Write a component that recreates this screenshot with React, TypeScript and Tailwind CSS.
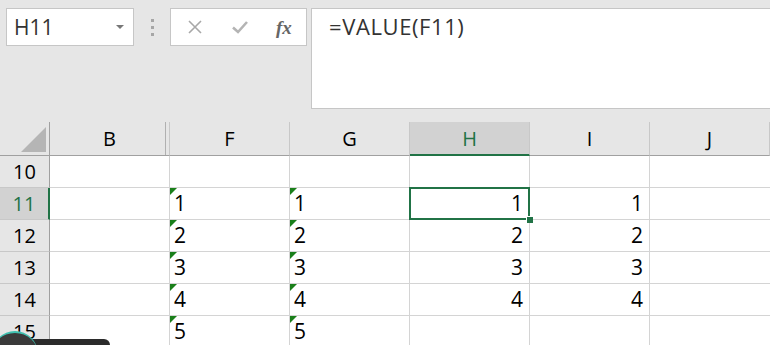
import React from "react";

type Row = {
  num: number;
  f?: string;
  g?: string;
  h?: string;
  i?: string;
};

const rows: Row[] = [
  { num: 10 },
  { num: 11, f: "1", g: "1", h: "1", i: "1" },
  { num: 12, f: "2", g: "2", h: "2", i: "2" },
  { num: 13, f: "3", g: "3", h: "3", i: "3" },
  { num: 14, f: "4", g: "4", h: "4", i: "4" },
  { num: 15, f: "5", g: "5" },
];

const cols = ["B", "F", "G", "H", "I", "J"];

const font = { fontFamily: '"Open Sans", "Noto Sans", sans-serif' };

const TextCell = ({ value }: { value?: string }) => (
  <div className="relative h-8 border-r border-b border-[#d4d4d4] flex items-end pl-[4px] pb-[1px] text-[21px] leading-none text-black">
    {value && (
      <span className="absolute left-0 top-0 w-0 h-0 border-t-[7px] border-r-[7px] border-t-[#1a7f1a] border-r-transparent" />
    )}
    <span className="pb-[4px]">{value}</span>
  </div>
);

const NumCell = ({ value, selected }: { value?: string; selected?: boolean }) => (
  <div
    className={`relative h-8 border-r border-b border-[#d4d4d4] flex items-end justify-end pr-[6px] text-[21px] leading-none text-black ${
      selected ? "z-10" : ""
    }`}
  >
    {selected && (
      <>
        <span className="absolute -left-[1px] -top-[1px] -right-[1px] -bottom-[1px] border-2 border-[#217346]" />
        <span className="absolute -right-[4px] -bottom-[4px] w-[7px] h-[7px] bg-[#217346] border-l border-t border-white" />
      </>
    )}
    <span className="pb-[5px]">{value}</span>
  </div>
);

export default function App() {
  return (
    <div className="w-[770px] h-[345px] overflow-hidden relative bg-white" style={font}>
      {/* formula bar */}
      <div className="h-[122px] bg-[#e6e6e6] flex items-start pt-2 pl-[6px] gap-0">
        <div className="w-[128px] h-[38px] bg-white border border-[#c6c6c6] flex items-center justify-between pl-[7px] pr-[9px]">
          <span className="text-[21px] text-[#333] leading-none">H11</span>
          <span className="w-0 h-0 border-l-[4px] border-r-[4px] border-t-[4px] border-l-transparent border-r-transparent border-t-[#777]" />
        </div>
        <div className="w-[36px] h-[38px] flex flex-col items-center justify-center gap-[4px]">
          <span className="w-[3px] h-[3px] bg-[#a6a6a6]" />
          <span className="w-[3px] h-[3px] bg-[#a6a6a6]" />
          <span className="w-[3px] h-[3px] bg-[#a6a6a6]" />
        </div>
        <div className="w-[137px] h-[38px] bg-white border border-[#c6c6c6] flex items-center pl-[15px] gap-[26px]">
          <svg width="16" height="16" viewBox="0 0 16 16" className="ml-[1px]">
            <path d="M2 2 L14 14 M14 2 L2 14" stroke="#a8a8a8" strokeWidth="1.6" fill="none" />
          </svg>
          <svg width="18" height="16" viewBox="0 0 18 16" className="ml-[2px]">
            <path d="M2 8.5 L7 13 L16 3" stroke="#b4b4b4" strokeWidth="2.6" fill="none" />
          </svg>
          <span
            className="text-[19px] italic font-bold text-[#666] leading-none ml-[1px]"
            style={{ fontFamily: '"Liberation Serif", serif' }}
          >
            fx
          </span>
        </div>
        <div className="ml-[4px] flex-1 h-[101px] bg-white border border-[#c6c6c6] border-r-0 pl-[17px] pt-[6px]">
          <span className="text-[22px] tracking-[0.6px] text-[#333] leading-none">=VALUE(F11)</span>
        </div>
      </div>

      {/* sheet */}
      <div className="grid grid-cols-[50px_120px_120px_120px_120px_120px_120px]">
        {/* header row */}
        <div className="h-[34px] bg-[#e6e6e6] border-r border-b border-[#a0a0a0] flex items-end justify-end pr-[3px] pb-[3px]">
          <svg width="25" height="25" viewBox="0 0 25 25">
            <path d="M25 0 L25 25 L0 25 Z" fill="#b5b5b5" />
          </svg>
        </div>
        {cols.map((c) => {
          const active = c === "H";
          return (
            <div
              key={c}
              className={`relative h-[34px] flex items-center justify-center text-[20px] leading-none border-r border-[#c8c8c8] ${
                active
                  ? "bg-[#d2d2d2] text-[#217346] border-b-2 border-b-[#217346]"
                  : "bg-[#e6e6e6] text-black border-b border-b-[#a0a0a0]"
              }`}
            >
              {c === "B" && (
                <span className="absolute right-[1px] top-0 bottom-0 w-[3px] border-l border-[#b0b0b0]" />
              )}
              <span className={active ? "pt-[2px]" : ""}>{c}</span>
            </div>
          );
        })}

        {rows.map((r) => {
          const active = r.num === 11;
          return (
            <React.Fragment key={r.num}>
              <div
                className={`h-8 flex items-center justify-center text-[20px] leading-none border-b border-[#c8c8c8] ${
                  active
                    ? "bg-[#d2d2d2] text-[#217346] border-r-2 border-r-[#217346]"
                    : "bg-[#e6e6e6] text-black border-r border-r-[#a0a0a0]"
                }`}
              >
                {r.num}
              </div>
              <div className="h-8 border-r border-b border-[#d4d4d4]" />
              <TextCell value={r.f} />
              <TextCell value={r.g} />
              <NumCell value={r.h} selected={active} />
              <NumCell value={r.i} />
              <div className="h-8 border-b border-[#d4d4d4]" />
            </React.Fragment>
          );
        })}
      </div>

      {/* floating overlay bottom-left */}
      <div className="absolute left-0 bottom-0 w-[110px] h-[6px] bg-[#2b2b2b] rounded-tr-[8px]" />
      <div className="absolute -left-[8px] top-[331px] w-[46px] h-[46px] rounded-full bg-[#3a3a3a] border-t-[2px] border-t-[#3fc1b0]" />
    </div>
  );
}
